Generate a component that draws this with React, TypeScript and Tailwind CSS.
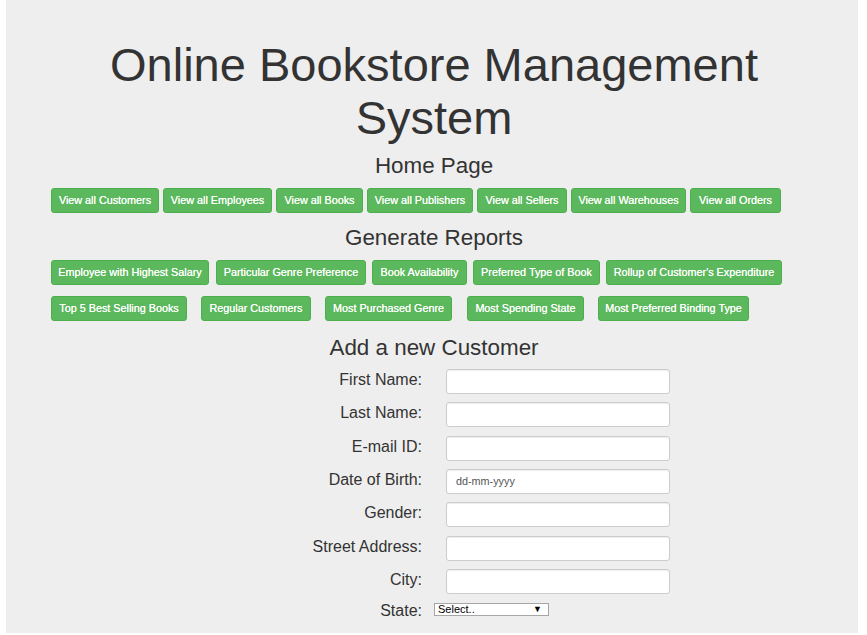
import React from "react";

type Btn = { label: string; cls: string };

const viewButtons: Btn[] = [
  { label: "View all Customers", cls: "w-[108px]" },
  { label: "View all Employees", cls: "w-[109px] ml-[4px]" },
  { label: "View all Books", cls: "w-[87px] ml-[4px]" },
  { label: "View all Publishers", cls: "w-[106px] ml-[4px]" },
  { label: "View all Sellers", cls: "w-[90px] ml-[4px]" },
  { label: "View all Warehouses", cls: "w-[115px] ml-[4px]" },
  { label: "View all Orders", cls: "w-[91px] ml-[4px]" },
];

const reportsTop: Btn[] = [
  { label: "Employee with Highest Salary", cls: "w-[158px]" },
  { label: "Particular Genre Preference", cls: "w-[150px] ml-[7px]" },
  { label: "Book Availability", cls: "w-[95px] ml-[6px]" },
  { label: "Preferred Type of Book", cls: "w-[127px] ml-[6px]" },
  { label: "Rollup of Customer's Expenditure", cls: "w-[176px] ml-[6px]" },
];

const reportsBottom: Btn[] = [
  { label: "Top 5 Best Selling Books", cls: "w-[136px]" },
  { label: "Regular Customers", cls: "w-[110px] ml-[14px]" },
  { label: "Most Purchased Genre", cls: "w-[127px] ml-[14px]" },
  { label: "Most Spending State", cls: "w-[117px] ml-[15px]" },
  { label: "Most Preferred Binding Type", cls: "w-[151px] ml-[14px]" },
];

const fields = [
  "First Name:",
  "Last Name:",
  "E-mail ID:",
  "Date of Birth:",
  "Gender:",
  "Street Address:",
  "City:",
];

const ButtonRow = ({ items, className }: { items: Btn[]; className: string }) => (
  <div className={"flex ml-[41px] " + className}>
    {items.map((b) => (
      <button
        key={b.label}
        className={
          "h-[25px] shrink-0 whitespace-nowrap rounded-[3px] border border-[#4cae4c] bg-[#5cb85c] text-[10.8px] text-white [text-shadow:0_0_0.4px_#fff] " +
          b.cls
        }
      >
        {b.label}
      </button>
    ))}
  </div>
);

export default function App() {
  return (
    <div className="h-[635px] bg-white pl-[6px] font-['Liberation_Sans',Arial,sans-serif]">
      <div className="h-[633px] w-[852px] overflow-hidden bg-[#eeeeee] pl-[4px] text-[#333]">
        <h1 className="mx-auto w-[700px] pt-[38px] text-center text-[47px] leading-[53px]">
          Online Bookstore Management System
        </h1>

        <h3 className="mt-[9px] text-center text-[22.4px] leading-[26px]">Home Page</h3>
        <ButtonRow items={viewButtons} className="mt-[9px]" />

        <h3 className="mt-[12px] text-center text-[22.4px] leading-[26px]">Generate Reports</h3>
        <ButtonRow items={reportsTop} className="mt-[9px]" />
        <ButtonRow items={reportsBottom} className="mt-[11px]" />

        <h3 className="mt-[14px] text-center text-[22.4px] leading-[26px]">Add a new Customer</h3>

        <form className="mt-[8px] ml-[212px] flex flex-col gap-[8.33px]">
          {fields.map((f) => (
            <div key={f} className="flex h-[25px] items-start">
              <label className="w-[200px] text-right text-[16px] leading-[22px]">{f}</label>
              <div className="ml-[24px] flex h-[25px] w-[224px] items-center rounded-[3px] border border-[#cccccc] bg-white pl-[9px] shadow-[inset_0_1px_1px_rgba(0,0,0,0.075)]">
                {f === "Date of Birth:" && (
                  <span className="text-[10.8px] text-[#555]">dd-mm-yyyy</span>
                )}
              </div>
            </div>
          ))}
          <div className="flex h-[25px] items-start">
            <label className="w-[200px] text-right text-[16px] leading-[18px]">State:</label>
            <div className="ml-[12px] mt-[1px] flex h-[13px] w-[115px] items-center justify-between border border-[#a6a6a6] bg-white pl-[3px] pr-[6px] text-[11px] leading-none text-black">
              <span>Select..</span>
              <span className="text-[9px]">▼</span>
            </div>
          </div>
        </form>
      </div>
    </div>
  );
}
